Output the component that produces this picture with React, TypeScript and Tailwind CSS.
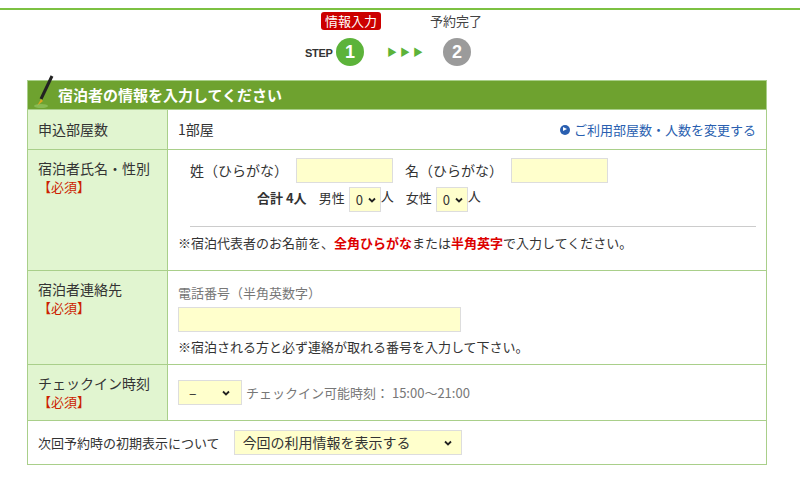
import React from 'react';

const font = { fontFamily: '"Noto Sans CJK JP", "Liberation Sans", sans-serif' };

const Req = () => <div className="text-[13px] text-[#cc2200] leading-4">【必須】</div>;

const Chev = () => (
  <svg width="10" height="10" viewBox="0 0 10 10" className="ml-1"><path d="M2 3.5 L5 6.5 L8 3.5" stroke="#222" strokeWidth="1.8" fill="none" /></svg>
);

export default function App() {
  return (
    <div className="w-[800px] h-[483px] bg-white overflow-hidden text-[#333] text-[14px]" style={font}>
      <div className="h-[10px] border-b-2 border-[#7cc142]" />
      <div className="relative h-[70px]">
        <div className="absolute left-[321px] top-[2px] bg-[#cc0000] text-white text-[13px] px-1 rounded-[3px] leading-[18px]">情報入力</div>
        <div className="absolute left-[430px] top-[1px] text-[13px] text-[#444]">予約完了</div>
        <div className="absolute left-[305px] top-[35px] text-[11px] font-bold tracking-tight text-[#333]" style={{ fontFamily: '"Liberation Sans", sans-serif' }}>STEP</div>
        <div className="absolute left-[336px] top-[28px] w-7 h-7 rounded-full bg-[#5cb33a] text-white font-bold text-[18px] flex items-center justify-center" style={{ fontFamily: '"Liberation Sans", sans-serif' }}>1</div>
        <div className="absolute left-[387px] top-[34px] text-[#5cb33a] text-[10px] tracking-[3px]">▶▶▶</div>
        <div className="absolute left-[443px] top-[28px] w-7 h-7 rounded-full bg-[#9b9b9b] text-white font-bold text-[18px] flex items-center justify-center" style={{ fontFamily: '"Liberation Sans", sans-serif' }}>2</div>
      </div>
      <div className="ml-[27px] w-[740px] border border-[#a9cf8a]">
        <div className="relative h-[28px] bg-[#6ea22f] text-white font-bold text-[15px] flex items-center pl-[30px]">
          <svg className="absolute left-[5px] top-[-6px]" width="22" height="34" viewBox="0 0 22 34">
            <path d="M19 1 L8 24" stroke="#222" strokeWidth="3" />
            <path d="M8 24 L4 31 L10 26 Z" fill="#d9a520" />
            <ellipse cx="8" cy="31" rx="7" ry="2" fill="#9acb6a" opacity="0.6" />
          </svg>
          宿泊者の情報を入力してください
        </div>
        <div className="flex border-t border-[#a9cf8a] h-[40px]">
          <div className="w-[140px] bg-[#e1f5d0] border-r border-[#a9cf8a] px-[10px] flex items-center">申込部屋数</div>
          <div className="flex-1 flex items-center justify-between px-[10px]">
            <span>1部屋</span>
            <span className="text-[#2a5fb0] text-[13px] flex items-center"><span className="inline-block w-[10px] h-[10px] rounded-full bg-[#2a5fb0] mr-1 relative"><span className="absolute left-[3.5px] top-[2.5px] border-l-[4px] border-l-white border-y-[2.5px] border-y-transparent" /></span>ご利用部屋数・人数を変更する</span>
          </div>
        </div>
        <div className="flex border-t border-[#a9cf8a] h-[121px]">
          <div className="w-[140px] bg-[#e1f5d0] border-r border-[#a9cf8a] px-[10px] pt-[8px]">宿泊者氏名・性別<Req /></div>
          <div className="flex-1 pl-[22px] pr-[10px] pt-[8px]">
            <div className="flex items-center gap-2">
              <span>姓（ひらがな）</span>
              <div className="w-[97px] h-[25px] bg-[#ffffcc] border border-[#ddd]" />
              <span className="ml-1">名（ひらがな）</span>
              <div className="w-[97px] h-[25px] bg-[#ffffcc] border border-[#ddd]" />
            </div>
            <div className="flex items-start ml-[67px] mt-[3px] text-[13px]">
              <span className="font-bold mt-[2px]">合計 4人</span>
              <span className="ml-3 mt-[2px]">男性</span>
              <div className="ml-1 mt-[1px] w-[32px] h-[25px] bg-[#ffffcc] border border-[#ddd] flex items-center pl-[6px]">0<Chev /></div>
              <span>人</span>
              <span className="ml-3 mt-[2px]">女性</span>
              <div className="ml-1 mt-[1px] w-[32px] h-[25px] bg-[#ffffcc] border border-[#ddd] flex items-center pl-[6px]">0<Chev /></div>
              <span>人</span>
            </div>
            <div className="border-t border-[#ccc] mt-[14px] ml-0" />
            <div className="text-[13px] mt-[6px] -ml-[12px]">※宿泊代表者のお名前を、<b className="text-[#dd0000]">全角ひらがな</b>または<b className="text-[#dd0000]">半角英字</b>で入力してください。</div>
          </div>
        </div>
        <div className="flex border-t border-[#a9cf8a] h-[94px]">
          <div className="w-[140px] bg-[#e1f5d0] border-r border-[#a9cf8a] px-[10px] pt-[8px]">宿泊者連絡先<Req /></div>
          <div className="flex-1 px-[10px] pt-[12px]">
            <div className="text-[13px] text-[#777]">電話番号（半角英数字）</div>
            <div className="w-[283px] h-[25px] bg-[#ffffcc] border border-[#ddd] mt-[4px]" />
            <div className="text-[13px] mt-[5px]">※宿泊される方と必ず連絡が取れる番号を入力して下さい。</div>
          </div>
        </div>
        <div className="flex border-t border-[#a9cf8a] h-[56px]">
          <div className="w-[140px] bg-[#e1f5d0] border-r border-[#a9cf8a] px-[10px] pt-[8px]">チェックイン時刻<Req /></div>
          <div className="flex-1 px-[10px] flex items-center">
            <div className="w-[64px] h-[25px] bg-[#ffffcc] border border-[#ddd] flex items-center justify-between px-[10px]"><span>–</span><Chev /></div>
            <span className="ml-1 text-[13px] text-[#777]">チェックイン可能時刻： 15:00～21:00</span>
          </div>
        </div>
        <div className="flex border-t border-[#a9cf8a] h-[44px] items-center px-[10px]">
          <span className="text-[13px]">次回予約時の初期表示について</span>
          <div className="ml-[14px] w-[228px] h-[25px] bg-[#ffffcc] border border-[#ddd] flex items-center justify-between px-[8px]"><span>今回の利用情報を表示する</span><Chev /></div>
        </div>
      </div>
    </div>
  );
}
